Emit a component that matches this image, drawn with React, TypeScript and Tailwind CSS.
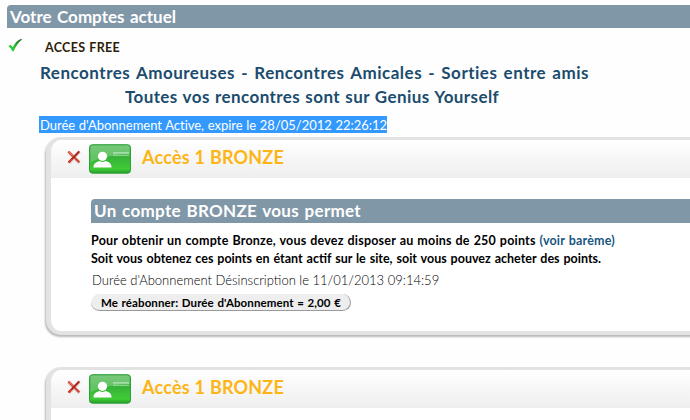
import type { ReactNode } from "react";
import clsx from "clsx";

function CheckIcon() {
  return (
    <svg className="mt-[10px] ml-[8px] h-[14px] w-[14px] shrink-0" viewBox="0 0 14 14">
      <defs>
        <linearGradient id="check" x1="0" y1="1" x2="1" y2="0">
          <stop offset="0" stopColor="#4be04b" />
          <stop offset="0.5" stopColor="#22b62c" />
          <stop offset="1" stopColor="#1d5a20" />
        </linearGradient>
      </defs>
      <path d="M.3 8 2.600 6.800l2.200 2.400C7 5 9.500 2 13.600.8l.2 1C10.500 4.300 8 8 5.700 13.200H4.200C3.300 11 2 9.500.3 8Z" fill="url(#check)" />
    </svg>
  );
}

function CrossIcon() {
  return (
    <svg className="h-[14px] w-[14px]" viewBox="0 0 14 14" fill="none">
      <path d="M1.500 2 12.500 13M12.500 1.700 2 12.800" stroke="#d8c8c4" strokeWidth="3.400" />
      <path d="M1.300 1.500 12.300 12.300" stroke="#cf4436" strokeWidth="2.100" />
      <path d="M12.300 1.300 1.500 12.500" stroke="#ad2018" strokeWidth="1.900" />
      <path d="M2 1.800 6.500 6.200" stroke="#ef7358" strokeWidth="1.100" />
      <path d="M5 9 1.800 12.200" stroke="#e23b27" strokeWidth="1.400" />
    </svg>
  );
}

function CardIcon({ id }: { id: string }) {
  return (
    <svg className="h-[30px] w-[42px]" viewBox="0 0 42 30">
      <defs>
        <linearGradient id={id} x1="0" y1="0" x2="0" y2="1">
          <stop offset="0" stopColor="#55b957" />
          <stop offset="0.45" stopColor="#37b339" />
          <stop offset="0.85" stopColor="#40cb36" />
          <stop offset="1" stopColor="#249b2a" />
        </linearGradient>
      </defs>
      <rect x=".5" y=".7" width="41" height="28.500" rx="3" fill={`url(#${id})`} stroke="#2fa03a" />
      <path d="M1.500 4Q1.500 1.500 4 1.500H38Q40.500 1.500 40.500 4V10Q20 10 1.500 18Z" fill="#fff" opacity=".22" />
      <path d="M24 8H40V9.700H24ZM24 10.700H40V12H24Z" fill="#fff" opacity=".4" />
      <circle cx="13.500" cy="12.300" r="4.600" fill="#fff" />
      <path d="M4.500 23.500C4.500 19.500 7 18 10.500 17Q13.500 19 16.500 17C20.500 18 22.500 19.500 22.500 23.500Z" fill="#fff" />
    </svg>
  );
}

function TitleBar({ className, children }: { className?: string; children: ReactNode }) {
  return (
    <h2 className={clsx("rounded-tl-[4px] bg-[#8097a8] text-[17px] font-bold whitespace-nowrap text-white", className)}>
      {children}
    </h2>
  );
}

function Panel({ id, children }: { id: string; children?: ReactNode }) {
  return (
    <section className="ml-[46px] h-[198px] w-[700px] shrink-0 overflow-hidden rounded-[15px] border-t-[3px] border-b-[4px] border-l-[5px] border-[#e3e3e3] bg-white shadow-[-1px_2px_2px_#b9b9b9]">
      <header className="flex h-[38px] bg-linear-to-b from-white to-[#eeeeee]">
        <div className="mt-[10px] ml-[16px]">
          <CrossIcon />
        </div>
        <div className="mt-[4px] ml-[8px]">
          <CardIcon id={id} />
        </div>
        <h3 className="mt-[5px] ml-[11px] w-[142px] text-[18px] leading-[24px] font-bold tracking-[0.2px] whitespace-nowrap text-[#fdb515] [text-align-last:justify]">
          Accès 1 BRONZE
        </h3>
      </header>
      {children}
    </section>
  );
}

export default function App() {
  return (
    <main className="flex h-[420px] w-[690px] flex-col overflow-hidden bg-[#fefefe] pt-[5px] font-[Lato,sans-serif]">
      <TitleBar className="ml-[7px] h-[23px] shrink-0 pl-[3px] leading-[24px]">
        <span className="block w-[166px] [text-align-last:justify]">Votre Comptes actuel</span>
      </TitleBar>

      <div className="flex h-[33px] shrink-0">
        <CheckIcon />
        <div className="mt-[11px] ml-[23px] w-[75px] text-[12.5px] leading-[18px] font-bold tracking-[0.3px] whitespace-nowrap text-[#2c1d08] [text-align-last:justify]">
          ACCES FREE
        </div>
      </div>

      <div className="h-[55px] shrink-0 text-[17px] leading-[24px] font-bold whitespace-nowrap text-[#1b4c6d]">
        <p className="ml-[40px] w-[549px] tracking-[0.5px] [text-align-last:justify]">
          Rencontres Amoureuses - Rencontres Amicales - Sorties entre amis
        </p>
        <p className="ml-[125px] w-[374px] tracking-[0.4px] [text-align-last:justify]">
          Toutes vos rencontres sont sur Genius Yourself
        </p>
      </div>

      <p className="ml-[39px] h-[17px] w-[348px] shrink-0 bg-[#3399ff] pl-px text-[13px] leading-[18px] tracking-[-0.02px] whitespace-nowrap text-white [text-align-last:justify]">
        Durée d'Abonnement Active, expire le 28/05/2012 22:26:12
      </p>

      <div className="mt-[4px] flex flex-col gap-[32px]">
        <Panel id="card-active">
          <div className="ml-[40px] pt-[21px] whitespace-nowrap text-black">
            <TitleBar className="h-[24px] pl-[3px] leading-[24px] tracking-[0.3px]">
              <span className="block w-[267px] [text-align-last:justify]">Un compte BRONZE vous permet</span>
            </TitleBar>
            <div className="mt-[9px] text-[12.5px] leading-[18px] font-bold">
              <p className="w-[524px] tracking-[0.2px] [text-align-last:justify]">
                Pour obtenir un compte Bronze, vous devez disposer au moins de 250 points{" "}
                <a className="text-[#185580]">(voir barème)</a>
              </p>
              <p className="w-[510px] [text-align-last:justify]">
                Soit vous obtenez ces points en étant actif sur le site, soit vous pouvez acheter des points.
              </p>
            </div>
            <p className="mt-[3px] ml-px w-[347px] text-[13px] leading-[18px] font-light text-black [text-align-last:justify]">
              Durée d'Abonnement Désinscription le 11/01/2013 09:14:59
            </p>
            <button className="mt-[5px] block h-[17px] w-[260px] rounded-[9px] border-r border-b border-[#999] bg-[#eeeeee] pr-[9px] pl-[10px] text-[11.5px] leading-[18px] font-bold tracking-[0.1px] [text-align-last:justify]">
              Me réabonner: Durée d'Abonnement = 2,00 €
            </button>
          </div>
        </Panel>
        <Panel id="card-next" />
      </div>
    </main>
  );
}
